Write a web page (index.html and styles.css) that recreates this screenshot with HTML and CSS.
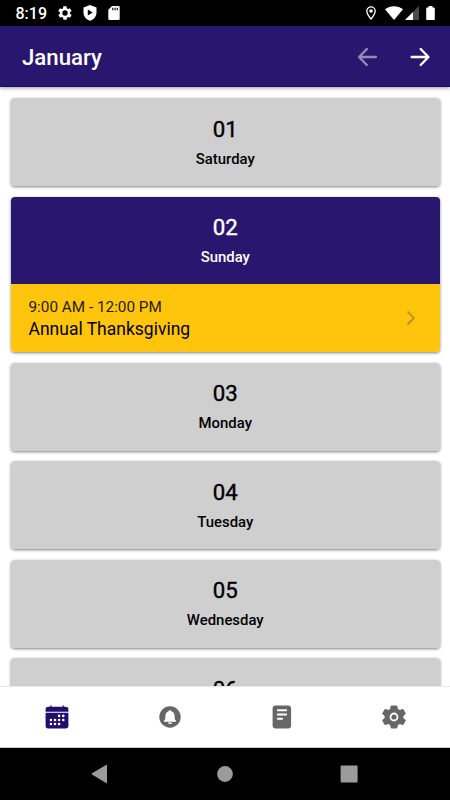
FILE: index.html
```html
<!DOCTYPE html>
<html lang="en">
<head>
    <meta charset="UTF-8">
    <meta name="viewport" content="width=device-width, initial-scale=1.0">
    <title>January</title>
    <link rel="stylesheet" href="styles.css">
</head>
<body>
    <div class="status-bar">
        <span class="clock">8:19</span>
        <svg class="status-gear" width="16" height="16" viewBox="0 0 24 24" fill="#fff"><path fill-rule="evenodd" d="M19.4 13c.1-.3.1-.7.1-1s0-.7-.1-1l2.1-1.600c.2-.1.2-.4.1-.6l-2-3.500c-.1-.2-.4-.3-.6-.2l-2.500 1c-.5-.4-1.100-.7-1.700-1l-.4-2.600c0-.3-.2-.5-.5-.5h-4c-.2 0-.4.2-.5.4l-.4 2.700c-.6.2-1.200.6-1.700 1l-2.500-1c-.2-.1-.5 0-.6.2l-2 3.500c-.1.2-.1.5.1.6L4.500 11c0 .3-.1.7-.1 1s0 .7.1 1l-2.100 1.600c-.2.2-.2.4-.1.6l2 3.500c.1.2.4.3.6.2l2.500-1c.5.4 1.100.7 1.700 1l.4 2.600c0 .3.2.5.5.5h4c.2 0 .5-.2.5-.4l.4-2.700c.6-.2 1.200-.6 1.700-1l2.500 1c.2.1.5 0 .6-.2l2-3.500c.1-.2.1-.5-.1-.6zM12 8a4 4 0 1 1 0 8 4 4 0 0 1 0-8z"/></svg>
        <svg class="status-shield" width="14" height="16" viewBox="0 0 14 16"><path fill="#fff" d="M7 0l6.500 2.400v5c0 3.900-2.700 7.100-6.500 8.400C3.200 14.500.5 11.300.5 7.400v-5z"/><path d="M4.800 4.600v6l4.900-3z"/></svg>
        <svg class="status-card" width="12" height="14" viewBox="0 0 12 14"><path fill="#fff" d="M4 0h6.500A1.200 1.200 0 0 1 11.700 1.200v11.600A1.200 1.200 0 0 1 10.500 14h-9A1.200 1.200 0 0 1 .3 12.800V3.800z"/><path fill="#333" d="M4 1.800h1.400v2.500H4zM6.300 1.800h1.400v2.500H6.300zM8.600 1.800H10v2.500H8.600z"/></svg>
        <div class="status-right">
            <svg width="10" height="14" viewBox="0 0 10 14"><path fill="none" stroke="#fff" stroke-width="1.300" d="M5 .9a4.200 4.200 0 0 1 4.200 4.200C9.200 8.300 5 13 5 13S.8 8.300.8 5.100A4.200 4.200 0 0 1 5 .9z"/><circle cx="5" cy="5" r="1.800" fill="#fff"/></svg>
            <svg class="wifi" width="18" height="14" viewBox="0 0 18 14"><path fill="#fff" d="M0 3.200C5.200-.9 12.800-.9 18 3.200L9 14z"/></svg>
            <svg class="signal" width="14" height="14" viewBox="0 0 14 14"><path fill="#4c4c4c" d="M14 0v14H0z"/><path fill="#fff" d="M8 6v8H0z"/></svg>
            <svg class="battery" width="9" height="14" viewBox="0 0 9 14"><path fill="#fff" d="M2.500 0h4v1.500H8a.8.8 0 0 1 .8.8v10.900a.8.8 0 0 1-.8.8H1a.8.8 0 0 1-.8-.8V2.300A.8.8 0 0 1 1 1.500h1.500z"/></svg>
        </div>
    </div>

    <header class="toolbar">
        <h1>January</h1>
        <button class="arrow disabled" aria-label="Previous month">
            <svg width="20" height="20" viewBox="0 0 20 20"><path d="M9.800 2L2.100 10l7.700 8M2.300 10h16.500"/></svg>
        </button>
        <button class="arrow" aria-label="Next month">
            <svg width="20" height="20" viewBox="0 0 20 20"><path d="M10.700 2l7.700 8-7.700 8M18.200 10h-16.500"/></svg>
        </button>
    </header>

    <main class="days">
        <div class="card">
            <div class="day"><h2>01</h2><p>Saturday</p></div>
        </div>
        <div class="card">
            <div class="day active"><h2>02</h2><p>Sunday</p></div>
            <div class="event">
                <div class="event-text">
                    <p class="time">9:00 AM - 12:00 PM</p>
                    <p class="name">Annual Thanksgiving</p>
                </div>
                <svg width="10" height="16" viewBox="0 0 10 16"><path d="M1.500 1.500L8 8l-6.500 6.500"/></svg>
            </div>
        </div>
        <div class="card">
            <div class="day"><h2>03</h2><p>Monday</p></div>
        </div>
        <div class="card">
            <div class="day"><h2>04</h2><p>Tuesday</p></div>
        </div>
        <div class="card">
            <div class="day"><h2>05</h2><p>Wednesday</p></div>
        </div>
        <div class="card">
            <div class="day"><h2>06</h2></div>
        </div>
    </main>

    <nav class="tabs">
        <a class="selected" aria-label="Calendar">
            <svg width="24" height="24" viewBox="0 0 24 24">
                <path d="M.6 6.700V4.500A2.700 2.700 0 0 1 3.300 1.800h1.900V.5h1.300v1.300h11V.5h1.300v1.300h1.900a2.700 2.700 0 0 1 2.700 2.700v2.200z"/>
                <path d="M.6 7.800h22.800v12.900a2.700 2.700 0 0 1-2.700 2.700H3.300A2.700 2.700 0 0 1 .6 20.700z"/>
                <g fill="#fff"><circle cx="14.100" cy="10.900" r="1.300"/><circle cx="18.300" cy="10.900" r="1.300"/><circle cx="5.900" cy="15" r="1.300"/><circle cx="10" cy="15" r="1.300"/><circle cx="14.100" cy="15" r="1.300"/><circle cx="18.300" cy="15" r="1.300"/><circle cx="5.900" cy="19" r="1.300"/><circle cx="10" cy="19" r="1.300"/><circle cx="14.100" cy="19" r="1.300"/></g>
            </svg>
        </a>
        <a aria-label="Notifications">
            <svg width="24" height="24" viewBox="0 0 24 24">
                <circle cx="12" cy="12" r="10.700"/>
                <path fill="#fff" d="M12 5.200c.8 0 1.300.5 1.400 1.100 2.200.7 3.200 2.500 3.200 4.900 0 3.100.7 3.900 1.500 4.700v.9H5.900v-.9c.8-.8 1.500-1.600 1.500-4.700 0-2.400 1-4.200 3.200-4.900.1-.6.6-1.100 1.400-1.100zM10 17.500h4a2 1.500 0 0 1-4 0z"/>
            </svg>
        </a>
        <a aria-label="Notes">
            <svg width="24" height="24" viewBox="0 0 24 24">
                <rect x="2.600" y=".6" width="18.500" height="22.900" rx="3"/>
                <path fill="none" stroke="#fff" stroke-width="1.900" stroke-linecap="round" d="M7.800 5.300h8.400M7.800 9.500h8.400M7.800 13.700h4.300"/>
            </svg>
        </a>
        <a aria-label="Settings">
            <svg width="24" height="24" viewBox="0 0 24 24">
                <path d="M9.500.6h5a1 1 0 0 1 .9.800l.5 2.700 2 .8L20.300 4a1 1 0 0 1 1.200.4l2.100 3.700a1 1 0 0 1-.2 1.200L21.400 11v2l2 1.700a1 1 0 0 1 .2 1.200l-2.100 3.700a1 1 0 0 1-1.200.4l-2.400-.9-2 .8-.5 2.700a1 1 0 0 1-.9.800h-5a1 1 0 0 1-.9-.8l-.5-2.700-2-.8-2.400.9a1 1 0 0 1-1.200-.4L.4 15.900a1 1 0 0 1 .2-1.200L2.600 13v-2L.6 9.300A1 1 0 0 1 .4 8.100l2.100-3.700A1 1 0 0 1 3.700 4l2.400.9 2-.8.5-2.700a1 1 0 0 1 .9-.8z"/>
                <circle cx="12" cy="12" r="3.500" fill="none" stroke="#fff" stroke-width="1.800"/>
            </svg>
        </a>
    </nav>

    <div class="system-nav">
        <svg width="18" height="20" viewBox="0 0 18 20"><path d="M16 1.200v17.400a.6.600 0 0 1-1 .5L1 10.600a.8.800 0 0 1 0-1.300L15 .9a.6.600 0 0 1 1 .3z"/></svg>
        <svg width="18" height="18" viewBox="0 0 18 18"><circle cx="9" cy="9" r="7.900"/></svg>
        <svg width="18" height="18" viewBox="0 0 18 18"><rect x=".6" y=".6" width="17" height="17" rx="1"/></svg>
    </div>
</body>
</html>
```
FILE: styles.css
```css
* {
    box-sizing: border-box;
}
body {
    margin: 0;
    height: 100vh;
    display: flex;
    flex-direction: column;
    overflow: hidden;
    background: #ffffff;
    font-family: Roboto, sans-serif;
    color: #000000;
}
svg {
    display: block;
    flex-shrink: 0;
}
h1, h2, p {
    margin: 0;
}
.status-bar {
    height: 26px;
    flex-shrink: 0;
    display: flex;
    align-items: center;
    padding: 0 15px 0 15.5px;
    background: #000000;
    color: #ffffff;
}
.clock {
    width: 41.5px;
    padding-top: 2px;
    font-size: 16px;
    font-weight: 500;
    line-height: 26px;
}
.status-shield {
    margin-left: 9.5px;
}
.status-card {
    margin-left: 11px;
}
.status-right {
    display: flex;
    align-items: center;
    margin-left: auto;
}
.wifi {
    margin-left: 9px;
}
.signal {
    margin-left: 1.5px;
}
.battery {
    margin-left: 7.5px;
}
.toolbar {
    position: relative;
    height: 61px;
    flex-shrink: 0;
    display: flex;
    align-items: center;
    padding: 0 20px 0 22px;
    background: #29166f;
    border-bottom: 1px solid #1a0766;
    color: #ffffff;
    box-shadow: 0 1px 4px rgba(0, 0, 0, 0.4);
}
.toolbar h1 {
    flex: 1;
    font-size: 22.2px;
    font-weight: 500;
    padding-top: 2px;
}
.arrow {
    margin: 0 0 0 33px;
    padding: 1px 0 0;
    border: none;
    background: none;
}
.arrow.disabled {
    opacity: 0.5;
}
.arrow path {
    fill: none;
    stroke: #ffffff;
    stroke-width: 2.4;
    stroke-linecap: round;
    stroke-linejoin: round;
}
.days {
    flex: 1;
    min-height: 0;
    display: flex;
    flex-direction: column;
    gap: 10.5px;
    padding: 11.4px 10.5px 0 11px;
    overflow: hidden;
}
.card {
    flex-shrink: 0;
    border-radius: 4px;
    overflow: hidden;
    box-shadow: 0 1px 3px rgba(0, 0, 0, 0.5);
}
.day {
    height: 88px;
    padding-top: 17.5px;
    background: #cfcfcf;
    text-align: center;
}
.day h2 {
    font-size: 22.2px;
    line-height: 26px;
    font-weight: 400;
    -webkit-text-stroke: 0.4px currentColor;
}
.day p {
    margin-top: 7px;
    font-size: 14.9px;
    line-height: 20px;
    font-weight: 500;
}
.day.active {
    height: 87.2px;
    background: #29166f;
    color: #ffffff;
}
.event {
    height: 68px;
    display: flex;
    align-items: center;
    justify-content: space-between;
    padding: 0 23.5px 0 17.5px;
    background: #ffc40c;
}
.event path {
    fill: none;
    stroke: #bd9210;
    stroke-width: 1.8;
}
.event-text {
    padding-top: 1px;
}
.time {
    font-size: 15.3px;
    line-height: 21px;
    color: #241c06;
}
.name {
    font-size: 17.5px;
    line-height: 23px;
}
.tabs {
    position: relative;
    height: 62px;
    flex-shrink: 0;
    display: grid;
    grid-template-columns: repeat(4, 1fr);
    place-items: center;
    padding-left: 1.4px;
    background: #ffffff;
    border-top: 1px solid #e8e8e8;
    border-bottom: 1px solid #cccccc;
}
.tabs svg {
    fill: #666666;
}
.tabs .selected svg {
    fill: #210c70;
}
.system-nav {
    height: 52px;
    flex-shrink: 0;
    display: flex;
    align-items: center;
    justify-content: space-between;
    padding: 0 92px 0 91px;
    background: #000000;
}
.system-nav svg {
    fill: #9b9b9b;
}
```
